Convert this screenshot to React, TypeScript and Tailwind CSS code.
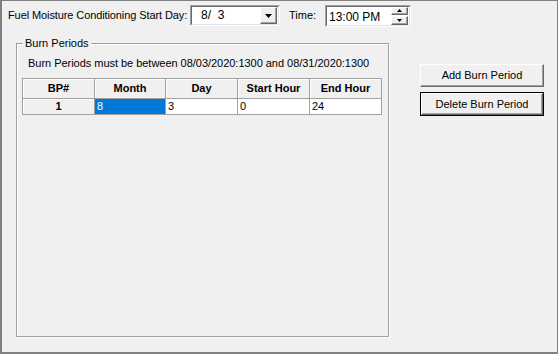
const DownArrow = ({ w = 7 }: { w?: number }) => (
  <svg width={w} height={Math.ceil(w / 2)} viewBox={`0 0 ${w} ${Math.ceil(w / 2)}`}>
    <polygon points={`0,0 ${w},0 ${w / 2},${Math.ceil(w / 2)}`} fill="#000" />
  </svg>
);

const UpArrow = ({ w = 5 }: { w?: number }) => (
  <svg width={w} height={Math.ceil(w / 2)} viewBox={`0 0 ${w} ${Math.ceil(w / 2)}`}>
    <polygon points={`0,${Math.ceil(w / 2)} ${w},${Math.ceil(w / 2)} ${w / 2},0`} fill="#000" />
  </svg>
);

const columns = [
  { title: 'BP#', width: 'w-[72px]' },
  { title: 'Month', width: 'w-[71px]' },
  { title: 'Day', width: 'w-[72px]' },
  { title: 'Start Hour', width: 'w-[72px]' },
  { title: 'End Hour', width: 'w-[72px]' },
];

const rows = [{ bp: 1, month: '8', day: '3', start: '0', end: '24' }];

const App = () => {
  return (
    <div className="flex h-[354px] w-[558px] flex-col border-t border-r border-b-2 border-l-2 border-[#808080] bg-[#f0f0f0] font-['Liberation_Sans',Arial,sans-serif] text-[11px] leading-[13px] text-black">
      {/* start day + time */}
      <div className="mt-[4px] flex h-[21px] items-center pl-[6px]">
        <span className="w-[182px] tracking-[-0.1px] whitespace-nowrap">Fuel Moisture Conditioning Start Day:</span>
        <div className="h-[21px] w-[90px] border border-t-[#a0a0a0] border-r-white border-b-white border-l-[#a0a0a0]">
          <div className="flex h-full items-center border border-t-[#696969] border-r-[#e3e3e3] border-b-[#e3e3e3] border-l-[#696969] bg-white">
            <span className="flex-1 pl-[9px] text-[12px] whitespace-pre">8/  3</span>
            <div className="mr-[1px] flex h-[17px] w-[17px] items-center justify-center border border-t-white border-r-[#696969] border-b-[#696969] border-l-white bg-[#f0f0f0] shadow-[inset_-1px_-1px_0_#a0a0a0]">
              <DownArrow />
            </div>
          </div>
        </div>
        <span className="ml-[9px] w-[36px]">Time:</span>
        <div className="h-[22px] w-[86px] border border-t-[#a0a0a0] border-r-white border-b-white border-l-[#a0a0a0]">
          <div className="flex h-full border border-t-[#696969] border-r-[#e3e3e3] border-b-[#e3e3e3] border-l-[#696969] bg-white">
            <span className="flex-1 pt-[3px] pl-[2px] text-[12px] leading-[14px]">13:00 PM</span>
            <div className="mr-[1px] flex w-[17px] flex-col gap-[1px]">
              <div className="flex h-[10px] items-center justify-center border border-t-white border-r-[#696969] border-b-[#696969] border-l-white bg-[#f0f0f0] shadow-[inset_-1px_-1px_0_#a0a0a0]">
                <UpArrow />
              </div>
              <div className="flex h-[9px] items-center justify-center border border-t-white border-r-[#696969] border-b-[#696969] border-l-white bg-[#f0f0f0] shadow-[inset_-1px_-1px_0_#a0a0a0]">
                <DownArrow w={5} />
              </div>
            </div>
          </div>
        </div>
      </div>

      <div className="mt-[17px] flex">
        {/* group box */}
        <div className="relative ml-[14px] h-[294px] w-[373px] border border-[#a0a0a0] pt-[13px] pl-[5px] shadow-[1px_1px_0_#fff,inset_1px_1px_0_#fff]">
          <span className="absolute top-[-7px] left-[6px] bg-[#f0f0f0] px-[2px]">Burn Periods</span>
          <p className="ml-[6px] tracking-[-0.03px]">Burn Periods must be between 08/03/2020:1300 and 08/31/2020:1300</p>

          <div className="mt-[8px] inline-block border-t border-l border-[#a0a0a0]">
            <div className="flex">
              {columns.map((col) => (
                <div
                  key={col.title}
                  className={`${col.width} flex h-[20px] items-center justify-center border-r border-b border-[#a0a0a0] bg-[#f0f0f0] font-bold shadow-[inset_1px_1px_0_#fff]`}
                >
                  {col.title}
                </div>
              ))}
            </div>
            {rows.map((row) => (
              <div key={row.bp} className="flex">
                <div className="flex h-[16px] w-[72px] items-center justify-center border-r border-b border-[#a0a0a0] bg-[#f0f0f0] font-bold shadow-[inset_1px_1px_0_#fff]">
                  {row.bp}
                </div>
                <div className="flex h-[16px] w-[71px] items-center border-r border-b border-[#a0a0a0] bg-[#0078d7] pl-[2px] text-white">
                  {row.month}
                </div>
                <div className="flex h-[16px] w-[72px] items-center border-r border-b border-[#a0a0a0] bg-white pl-[2px]">
                  {row.day}
                </div>
                <div className="flex h-[16px] w-[72px] items-center border-r border-b border-[#a0a0a0] bg-white pl-[2px]">
                  {row.start}
                </div>
                <div className="flex h-[16px] w-[72px] items-center border-r border-b border-[#a0a0a0] bg-white pl-[2px]">
                  {row.end}
                </div>
              </div>
            ))}
          </div>
        </div>

        {/* buttons */}
        <div className="ml-[31px] flex w-[124px] flex-col">
          <button className="mt-[21px] h-[23px] border border-t-white border-r-[#696969] border-b-[#696969] border-l-white bg-[#f0f0f0] shadow-[inset_-1px_-1px_0_#a0a0a0]">
            Add Burn Period
          </button>
          <div className="mt-[5px] h-[24px] border border-black">
            <button className="h-full w-full border border-t-white border-r-[#696969] border-b-[#696969] border-l-white bg-[#f0f0f0] shadow-[inset_-1px_-1px_0_#a0a0a0]">
              Delete Burn Period
            </button>
          </div>
        </div>
      </div>
    </div>
  );
};

export default App;
